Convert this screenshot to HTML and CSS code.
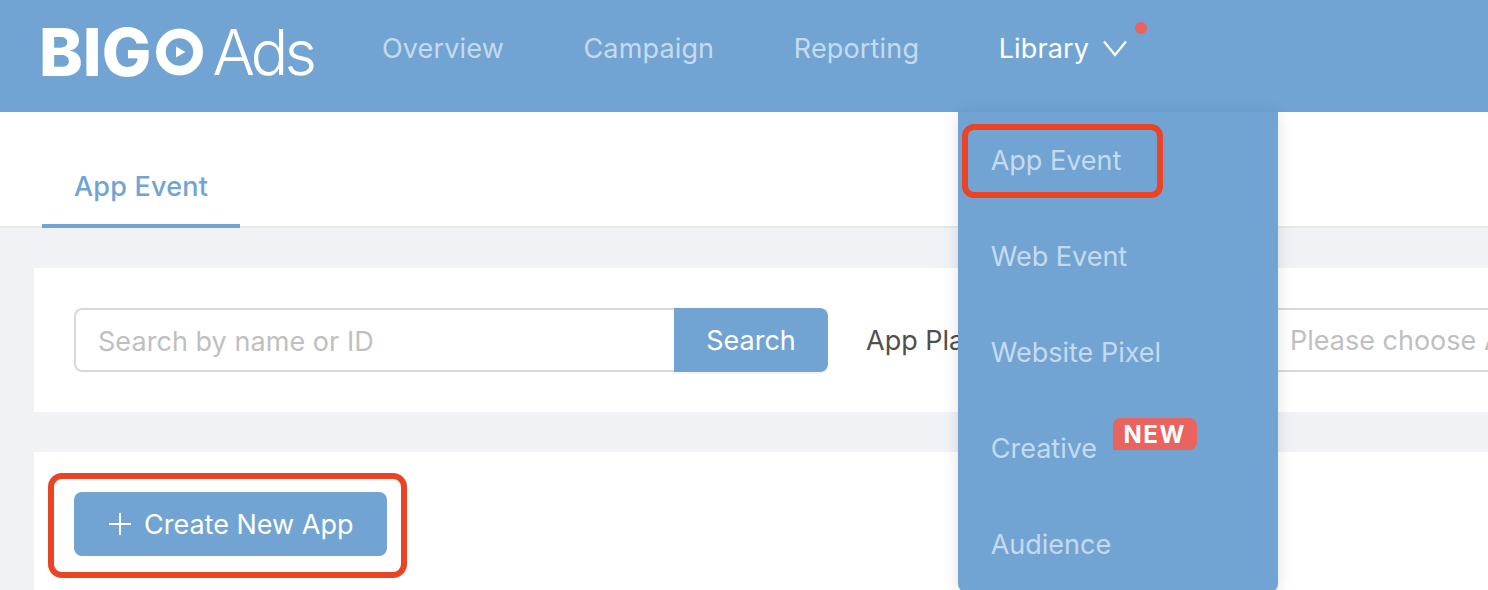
FILE: index.html
```html
<!DOCTYPE html>
<html lang="en">
<head>
<meta charset="utf-8">
<title>BIGO Ads</title>
<link rel="stylesheet" href="styles.css">
</head>
<body>
<header class="topbar">
  <a class="logo">
    <span class="logo-big">BIG</span>
    <svg class="logo-o" viewBox="0 0 48 48" aria-hidden="true">
      <circle cx="24" cy="24" r="19" fill="none" stroke="#fff" stroke-width="10"/>
      <path d="M20.500 18.500 L30 24 L20.500 29.500 Z" fill="#fff"/>
    </svg>
    <span class="logo-ads">Ads</span>
  </a>
  <nav class="nav">
    <a class="nav-item">Overview</a>
    <a class="nav-item">Campaign</a>
    <a class="nav-item">Reporting</a>
    <div class="nav-item nav-active">
      Library
      <svg class="chevron" viewBox="0 0 24 17" aria-hidden="true">
        <path d="M1 1.500 L12 15 L23 1.500" fill="none" stroke="#fff" stroke-width="2.200"/>
      </svg>
      <span class="dot"></span>
      <div class="dropdown">
        <a class="drop-item drop-marked">App Event</a>
        <a class="drop-item">Web Event</a>
        <a class="drop-item">Website Pixel</a>
        <a class="drop-item">Creative<span class="badge">NEW</span></a>
        <a class="drop-item">Audience</a>
      </div>
    </div>
  </nav>
</header>
<section class="tabs">
  <div class="tab">App Event</div>
</section>
<main class="content">
  <section class="card filters">
    <div class="search-box">Search by name or ID</div>
    <button class="search-btn">Search</button>
    <span class="filter-label">App Platform</span>
    <div class="select-box">Please choose App Platform</div>
  </section>
  <section class="card actions">
    <button class="create-btn">
      <svg class="plus" viewBox="0 0 22 22" aria-hidden="true">
        <path d="M11 0 V22 M0 11 H22" stroke="#fff" stroke-width="2"/>
      </svg>
      Create New App
    </button>
    <span class="mark mark-create"></span>
  </section>
</main>
</body>
</html>
```
FILE: styles.css
```css
*, *::after { box-sizing: border-box; }
html, body { margin: 0; height: 590px; overflow: hidden; }
body {
  width: 1488px;
  background: #f0f2f5;
  font-family: Inter, "Liberation Sans", sans-serif;
  font-size: 27px;
  color: #555;
}
.topbar {
  height: 112px;
  background: #71a4d3;
  display: flex;
  align-items: center;
  padding-left: 42px;
  position: relative;
  z-index: 2;
}
.logo {
  display: flex;
  align-items: center;
  width: 340px;
  height: 48px;
  margin-bottom: 8px;
  color: #fff;
  flex: none;
}
.logo-big {
  font-weight: 800;
  font-size: 66px;
  line-height: 48px;
  margin-left: -3px;
}
.logo-o { width: 47px; height: 48px; margin-left: 5px; flex: none; }
.logo-ads {
  font-weight: 300;
  font-size: 63px;
  line-height: 48px;
  letter-spacing: -4px;
  margin-left: 9px;
}
.nav {
  display: flex;
  align-items: center;
  gap: 79.6px;
  margin-bottom: 14px;
  letter-spacing: .15px;
}
.nav-item {
  color: rgba(255, 255, 255, .62);
  line-height: 40px;
  position: relative;
  white-space: nowrap;
}
.nav-active { color: #fff; }
.chevron { width: 24px; height: 17px; margin-left: 6px; position: relative; top: -1px; }
.dot {
  position: absolute;
  left: 136px;
  top: -7px;
  width: 12px;
  height: 12px;
  border-radius: 50%;
  background: #e9635f;
}
.dropdown {
  position: absolute;
  left: -41px;
  top: 83px;
  width: 320px;
  height: 480px;
  background: #71a4d3;
  border-radius: 0 0 8px 8px;
  box-shadow: 0 2px 16px rgba(0, 0, 0, .12);
  display: flex;
  flex-direction: column;
  letter-spacing: 0;
}
.drop-item {
  display: flex;
  height: 96px;
  flex: none;
  align-items: center;
  padding: 2px 0 0 33px;
  color: rgba(255, 255, 255, .62);
  position: relative;
}
.drop-marked::after {
  content: "";
  position: absolute;
  left: 4px;
  top: 12px;
  width: 201px;
  height: 74px;
  border: 6px solid #ea4425;
  border-radius: 12px;
}
.badge {
  position: absolute;
  left: 155px;
  top: 18px;
  width: 84px;
  height: 32px;
  background: #e9635f;
  border-radius: 8px 8px 8px 0;
  color: #fff;
  font-size: 24px;
  font-weight: 700;
  line-height: 33px;
  text-align: center;
  letter-spacing: 1.5px;
}
.tabs {
  height: 116px;
  background: #fff;
  border-bottom: 2px solid #e8e8e8;
  padding-left: 42px;
}
.tab {
  width: 198px;
  height: 116px;
  padding: 57px 0 0 32px;
  color: #71a4d3;
  font-weight: 500;
  line-height: 36px;
  letter-spacing: .2px;
  border-bottom: 4px solid #71a4d3;
}
.content { padding: 40px 0 0 34px; width: 1700px; }
.card { background: #fff; }
.filters {
  height: 144px;
  margin-bottom: 40px;
  padding: 40px 0 0 40px;
  display: flex;
  align-items: flex-start;
}
.search-box {
  width: 600px;
  height: 64px;
  border: 2px solid #d9d9d9;
  border-right: 0;
  border-radius: 8px 0 0 8px;
  padding-left: 22px;
  line-height: 64px;
  letter-spacing: .05px;
  color: #bfbfbf;
  flex: none;
}
.search-btn {
  width: 154px;
  height: 64px;
  border: 0;
  border-radius: 0 8px 8px 0;
  background: #71a4d3;
  color: #fff;
  font: inherit;
  padding: 0;
  flex: none;
  box-shadow: 0 2px 0 rgba(0, 0, 0, .04);
}
.filter-label {
  margin-left: 38px;
  width: 398px;
  line-height: 66px;
  flex: none;
  color: #4f4f4f;
}
.select-box {
  width: 500px;
  height: 64px;
  border: 2px solid #d9d9d9;
  padding-left: 24px;
  line-height: 62px;
  white-space: nowrap;
  color: #bfbfbf;
  flex: none;
}
.actions {
  height: 200px;
  padding: 40px 0 0 40px;
  position: relative;
}
.create-btn {
  width: 313px;
  height: 64px;
  border: 0;
  border-radius: 8px;
  background: #71a4d3;
  color: #fff;
  font: inherit;
  padding: 0 0 0 35px;
  display: flex;
  align-items: center;
  gap: 13px;
}
.plus { width: 22px; height: 22px; flex: none; }
.mark-create {
  position: absolute;
  left: 14px;
  top: 21px;
  width: 359px;
  height: 105px;
  border: 6px solid #ea4425;
  border-radius: 14px;
}
```
